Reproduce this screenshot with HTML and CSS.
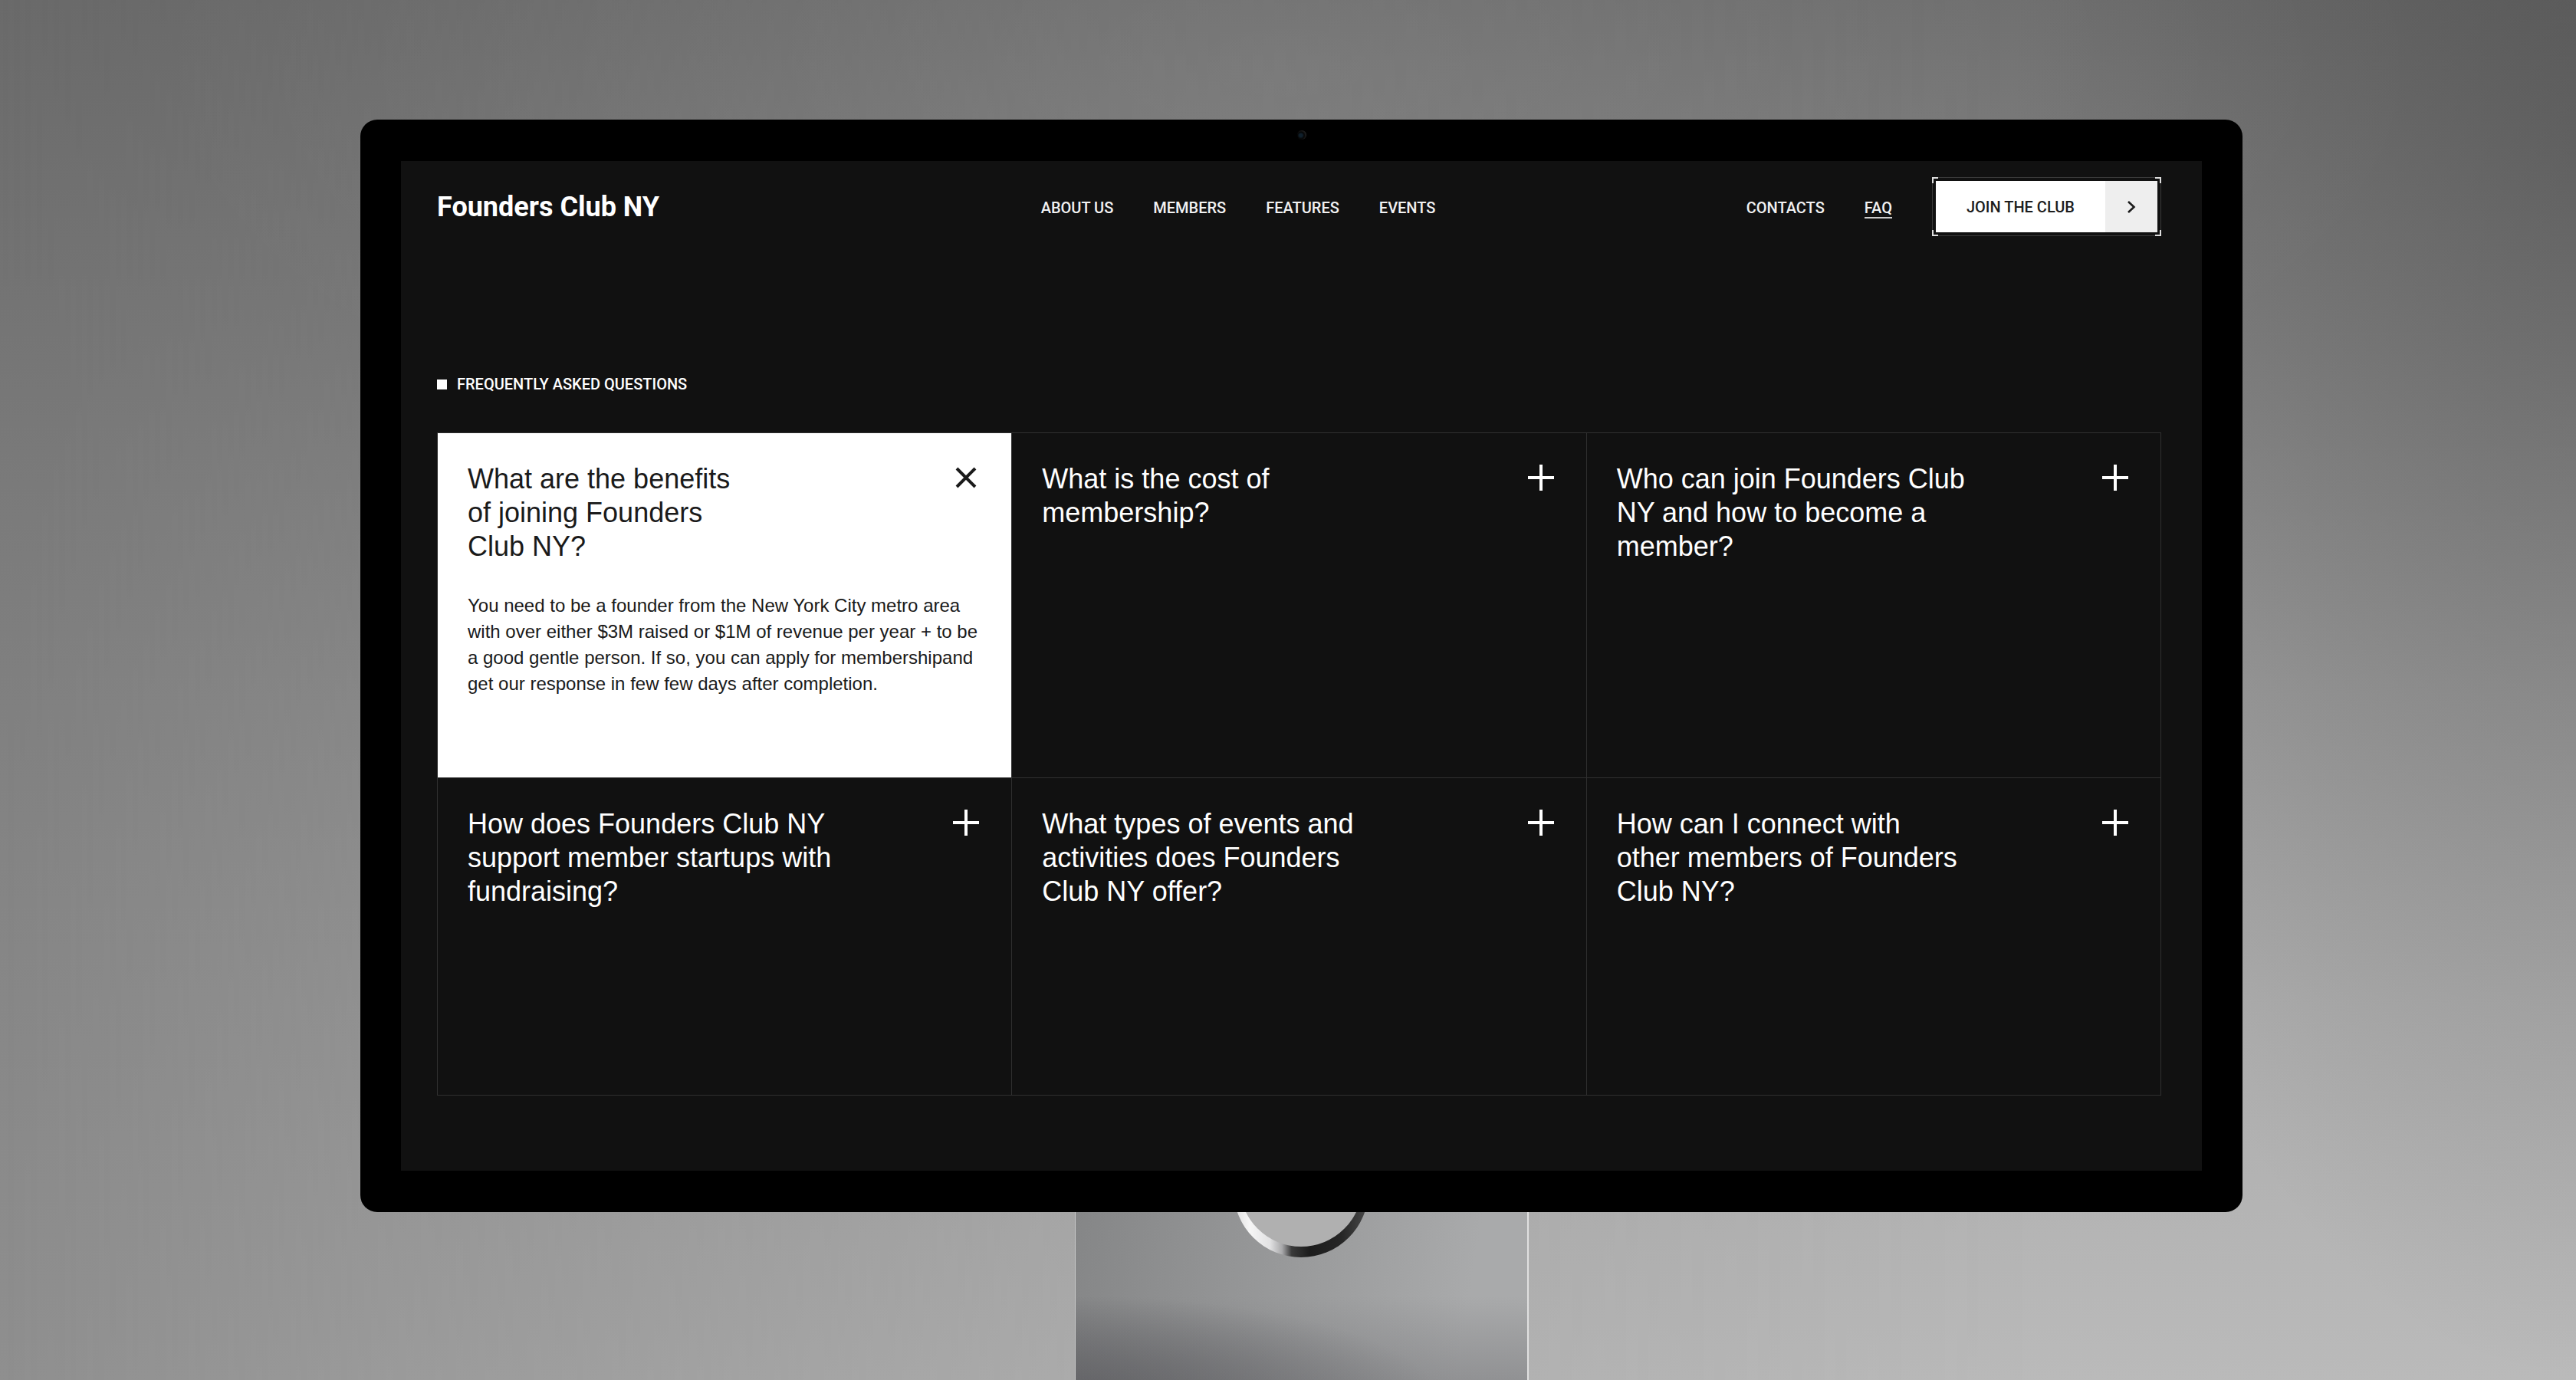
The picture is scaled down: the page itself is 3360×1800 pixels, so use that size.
FILE: index.html
```html
<!DOCTYPE html>
<html lang="en">
<head>
<meta charset="utf-8">
<meta name="viewport" content="width=device-width, initial-scale=1">
<title>Founders Club NY – FAQ</title>
<link rel="stylesheet" href="styles.css">
</head>
<body>
<div class="stage">
  <div class="monitor">
    <span class="camera"></span>
    <div class="screen">
      <header class="header">
        <a class="logo" href="#">Founders Club NY</a>
        <nav class="nav" aria-label="Main">
          <a class="link" href="#about">ABOUT US</a>
          <a class="link" href="#members">MEMBERS</a>
          <a class="link" href="#features">FEATURES</a>
          <a class="link" href="#events">EVENTS</a>
        </nav>
        <div class="actions">
          <a class="link" href="#contacts">CONTACTS</a>
          <a class="link link-current" href="#faq" aria-current="page">FAQ</a>
          <button class="join" type="button">
            <span class="join-text">JOIN THE CLUB</span>
            <span class="join-arrow">
              <svg width="12" height="18" viewBox="0 0 12 18" fill="none" stroke="currentColor" stroke-width="2.6" aria-hidden="true"><path d="M2 2l7.500 7L2 16"/></svg>
            </span>
            <svg class="corner corner-tl" viewBox="0 0 8 8" aria-hidden="true"><path d="M8 1H1V8"/></svg>
            <svg class="corner corner-tr" viewBox="0 0 8 8" aria-hidden="true"><path d="M0 1H7V8"/></svg>
            <svg class="corner corner-bl" viewBox="0 0 8 8" aria-hidden="true"><path d="M8 7H1V0"/></svg>
            <svg class="corner corner-br" viewBox="0 0 8 8" aria-hidden="true"><path d="M0 7H7V0"/></svg>
          </button>
        </div>
      </header>
      <main id="faq">
        <h1 class="label">FREQUENTLY ASKED QUESTIONS</h1>
        <div class="grid">
          <article class="card card-open">
            <div class="card-head">
              <h2 class="question">What are the benefits<br>of joining Founders<br>Club NY?</h2>
              <button class="toggle" type="button" aria-expanded="true" aria-label="Close answer">
                <svg class="icon" viewBox="0 0 34 34" aria-hidden="true"><path d="M5 5l24 24M29 5L5 29"/></svg>
              </button>
            </div>
            <p class="answer">You need to be a founder from the New York City metro area<br>with over either $3M raised or $1M of revenue per year + to be<br>a good gentle person. If so, you can apply for membershipand<br>get our response in few few days after completion.</p>
          </article>
          <article class="card">
            <div class="card-head">
              <h2 class="question">What is the cost of<br>membership?</h2>
              <button class="toggle" type="button" aria-expanded="false" aria-label="Open answer">
                <svg class="icon" viewBox="0 0 34 34" aria-hidden="true"><path d="M17 0v34M0 17h34"/></svg>
              </button>
            </div>
          </article>
          <article class="card">
            <div class="card-head">
              <h2 class="question">Who can join Founders Club<br>NY and how to become a<br>member?</h2>
              <button class="toggle" type="button" aria-expanded="false" aria-label="Open answer">
                <svg class="icon" viewBox="0 0 34 34" aria-hidden="true"><path d="M17 0v34M0 17h34"/></svg>
              </button>
            </div>
          </article>
          <article class="card">
            <div class="card-head">
              <h2 class="question">How does Founders Club NY<br>support member startups with<br>fundraising?</h2>
              <button class="toggle" type="button" aria-expanded="false" aria-label="Open answer">
                <svg class="icon" viewBox="0 0 34 34" aria-hidden="true"><path d="M17 0v34M0 17h34"/></svg>
              </button>
            </div>
          </article>
          <article class="card">
            <div class="card-head">
              <h2 class="question">What types of events and<br>activities does Founders<br>Club NY offer?</h2>
              <button class="toggle" type="button" aria-expanded="false" aria-label="Open answer">
                <svg class="icon" viewBox="0 0 34 34" aria-hidden="true"><path d="M17 0v34M0 17h34"/></svg>
              </button>
            </div>
          </article>
          <article class="card">
            <div class="card-head">
              <h2 class="question">How can I connect with<br>other members of Founders<br>Club NY?</h2>
              <button class="toggle" type="button" aria-expanded="false" aria-label="Open answer">
                <svg class="icon" viewBox="0 0 34 34" aria-hidden="true"><path d="M17 0v34M0 17h34"/></svg>
              </button>
            </div>
          </article>
        </div>
      </main>
    </div>
  </div>
  <div class="stand">
    <svg class="ring" width="176" height="60" viewBox="0 0 176 60" aria-hidden="true">
      <defs>
        <linearGradient id="rim" x1="0" y1="0" x2="176" y2="0" gradientUnits="userSpaceOnUse">
          <stop offset="0" stop-color="#dcdcdc"/>
          <stop offset=".12" stop-color="#f6f6f6"/>
          <stop offset=".27" stop-color="#e2e2e3"/>
          <stop offset=".36" stop-color="#a8a8aa"/>
          <stop offset=".43" stop-color="#3a3a3a"/>
          <stop offset=".56" stop-color="#1c1c1c"/>
          <stop offset=".8" stop-color="#262626"/>
          <stop offset="1" stop-color="#4a4a4a"/>
        </linearGradient>
      </defs>
      <circle cx="88" cy="-29" r="88" fill="url(#rim)"/>
      <circle cx="88" cy="-35" r="80" fill="#b0b0b0"/>
    </svg>
  </div>
</div>
</body>
</html>
```
FILE: styles.css
```css
* {
  box-sizing: border-box;
}

body {
  margin: 0;
  background: #888;
  color: #fff;
  font-family: "Liberation Sans", Arial, sans-serif;
}

/* Studio backdrop: a darker left side that fades into a brighter right side */
.stage {
  position: relative;
  isolation: isolate;
  min-height: 100vh;
  padding-top: 156px;
  display: grid;
  grid-template-columns: 470fr 2455fr 435fr;
  grid-template-rows: auto 1fr;
  background: linear-gradient(#6a6a6a 0, #7a7a7a 35%, #848484 62%, #8f8f8f 100%);
}

.stage::before {
  content: "";
  position: absolute;
  inset: 0;
  z-index: -1;
  background:
    radial-gradient(ellipse 22% 90% at 100% 10%, rgba(50, 50, 50, .32), rgba(50, 50, 50, 0)),
    linear-gradient(#6c6c6c 0, #838383 24%, #9c9c9c 50%, #adadad 73%, #bababa 100%);
  mask-image: linear-gradient(to right, transparent 0, rgba(0, 0, 0, .25) 14%, rgba(0, 0, 0, .65) 42%, #000 80%);
}

.stage::after {
  content: "";
  position: absolute;
  inset: 0;
  z-index: -1;
  background: radial-gradient(ellipse 45% 35% at 50% 5%, rgba(255, 255, 255, .08), rgba(255, 255, 255, 0));
}

.monitor {
  grid-column: 2;
  position: relative;
  padding: 54px 53px;
  background: #000;
  border-radius: 22px;
}

.camera {
  position: absolute;
  top: 14px;
  left: 50%;
  width: 12px;
  height: 12px;
  margin-left: -6px;
  border-radius: 50%;
  background: radial-gradient(circle at 40% 55%, #10202c 0 20%, #050505 45%, #444 100%);
}

.screen {
  padding: 21px 53px 98px 47px;
  background: #111;
}

/* Header */
.header {
  display: grid;
  grid-template-columns: repeat(3, 1fr);
  align-items: center;
}

.logo,
.link,
.label,
.join {
  font-family: Roboto, "Liberation Sans", sans-serif;
  font-weight: 500;
}

.logo {
  color: #fff;
  font-size: 36px;
  font-weight: 700;
  line-height: 44px;
  text-decoration: none;
}

.nav {
  display: flex;
  gap: 52px;
  padding-left: 38px;
}

.link {
  padding-top: 4px;
  border-bottom: 2px solid transparent;
  color: #f2f2f2;
  font-size: 20px;
  line-height: 24px;
  text-decoration: none;
  white-space: nowrap;
}

.link-current {
  border-color: #ccc;
}

.actions {
  display: flex;
  align-items: center;
  justify-content: flex-end;
  gap: 52px;
}

.join {
  position: relative;
  display: flex;
  height: 77px;
  padding: 4px;
  border: 1px solid #3a3a3a;
  background: transparent;
  color: #1c1c1c;
  font-size: 20px;
  line-height: 24px;
}

.join-text {
  display: flex;
  align-items: center;
  padding: 0 40px;
  background: #fff;
  white-space: nowrap;
}

.join-arrow {
  display: grid;
  place-items: center;
  width: 68px;
  background: #eee;
}

.corner {
  position: absolute;
  width: 8px;
  height: 8px;
  fill: none;
  stroke: #ddd;
  stroke-width: 2;
}

.corner-tl { top: -1px; left: -1px; }
.corner-tr { top: -1px; right: -1px; }
.corner-bl { bottom: -1px; left: -1px; }
.corner-br { bottom: -1px; right: -1px; }

/* Questions */
.label {
  display: flex;
  align-items: center;
  gap: 13px;
  margin: 181px 0 51px;
  font-size: 20px;
  line-height: 24px;
}

.label::before {
  content: "";
  width: 13px;
  height: 13px;
  background: #fff;
}

.grid {
  display: grid;
  grid-template-columns: repeat(3, 1fr);
  grid-template-rows: minmax(449px, auto) minmax(413px, auto);
  gap: 1px;
  padding: 1px;
  background: #303030;
}

.card {
  padding: 38px 42px 38px 39px;
  background: #111;
}

.card-open {
  background: #fff;
  color: #1a1a1a;
}

.card-head {
  display: flex;
  align-items: flex-start;
  justify-content: space-between;
}

.question {
  margin: 0;
  font-size: 36px;
  font-weight: 400;
  line-height: 44px;
}

.toggle {
  flex: none;
  margin-top: 3px;
  padding: 0;
  border: 0;
  background: none;
  color: inherit;
}

.icon {
  display: block;
  width: 34px;
  height: 34px;
  stroke: currentColor;
  stroke-width: 4;
}

.answer {
  margin: 38px 0 0;
  font-size: 24px;
  line-height: 34px;
  white-space: nowrap;
}

/* Monitor stand */
.stand {
  grid-column: 2;
  justify-self: center;
  width: 592px;
  border-left: 1px solid #c8c8c8;
  border-right: 2px solid #e0e0e0;
  background:
    linear-gradient(to bottom, rgba(100, 100, 104, 0) 50%, rgba(100, 100, 104, .35)),
    radial-gradient(ellipse 80% 60% at 0 110%, rgba(80, 80, 84, .7), rgba(80, 80, 84, 0)),
    linear-gradient(100deg, #858687 0, #98999a 45%, #a9aaab 85%);
}

.ring {
  display: block;
  margin: 0 auto;
}
```
